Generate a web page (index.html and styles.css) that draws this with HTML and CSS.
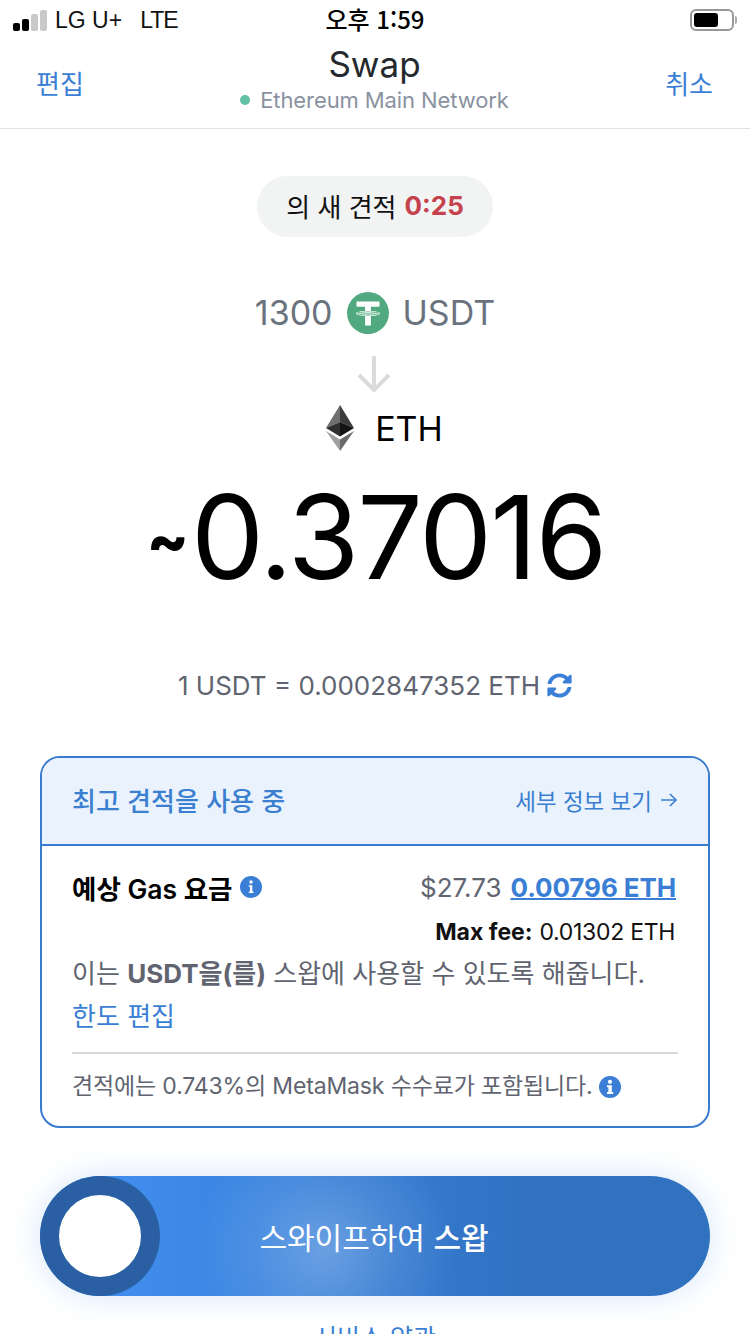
FILE: index.html
```html
<!DOCTYPE html>
<html lang="ko">
<head>
  <meta charset="UTF-8" />
  <meta name="viewport" content="width=device-width, initial-scale=1.0" />
  <title>Swap</title>
  <link rel="stylesheet" href="styles.css">
</head>
<body>
  <!-- status bar -->
  <div class="status-bar">
    <div class="status-left">
      <div class="signal">
        <span class="bar on b1"></span><span class="bar on b2"></span><span class="bar b3"></span><span class="bar b4"></span>
      </div>
      <span class="carrier">LG U+</span>
      <span class="carrier lte">LTE</span>
    </div>
    <div class="status-time">오후 1:59</div>
    <div class="status-right">
      <div class="battery"><div class="battery-fill"></div></div>
      <div class="battery-cap"></div>
    </div>
  </div>

  <!-- nav header -->
  <div class="nav">
    <a class="nav-link">편집</a>
    <div class="nav-title">
      <div class="nav-swap">Swap</div>
      <div class="nav-network"><span class="network-dot"></span>Ethereum Main Network</div>
    </div>
    <a class="nav-link">취소</a>
  </div>

  <div class="content">
    <div class="quote-pill"><span>의 새 견적</span><b class="timer">0:25</b></div>

    <div class="token-row source">
      <span class="token-text">1300</span>
      <svg class="token-icon" viewBox="0 0 42 42">
        <circle cx="21" cy="21" r="21" fill="#50a97f"/>
        <path d="M9.500 9.500h23v5.200h-8.600v4.200c5.200.3 9.200 1.300 9.200 2.500s-4 2.200-9.200 2.500v9.600h-5.800v-9.600c-5.200-.3-9.200-1.300-9.200-2.500s4-2.200 9.200-2.500v-4.200H9.500z" fill="#fff"/>
        <ellipse cx="21" cy="21.500" rx="11" ry="1.900" fill="#50a97f"/>
        <ellipse cx="21" cy="21.300" rx="9.800" ry="1.300" fill="#fff"/>
        <path d="M11.500 20.500c3 1 16 1 19 0" fill="none" stroke="#50a97f" stroke-width=".8"/>
      </svg>
      <span class="token-text">USDT</span>
    </div>

    <svg class="down-arrow" viewBox="0 0 34 38">
      <path d="M17 1v34M2 20l15 15 15-15" fill="none" stroke="#dadbdd" stroke-width="4"/>
    </svg>

    <div class="token-row dest">
      <svg class="eth-icon" viewBox="0 0 30 46">
        <path d="M15 0L1 23l14-6z" fill="#6f6f6f"/>
        <path d="M15 0l14 23-14-6z" fill="#3c3c3c"/>
        <path d="M15 17L1 23l14 8.500z" fill="#2f2f2f"/>
        <path d="M15 17l14 6-14 8.500z" fill="#141414"/>
        <path d="M1 26l14 20V34.500z" fill="#a0a0a0"/>
        <path d="M29 26L15 46V34.500z" fill="#6a6a6a"/>
      </svg>
      <span>ETH</span>
    </div>

    <div class="amount"><span class="tilde">~</span>0.37016</div>

    <div class="rate">
      <span>1 USDT = 0.0002847352 ETH</span>
      <svg class="refresh" viewBox="0 0 512 512">
        <path fill="#3a7fd8" d="M370.700 133.300C339.500 104 298.900 88 255.800 88c-77.500.1-144.300 53.200-162.800 126.900-1.300 5.400-6.100 9.200-11.700 9.200H24.100c-7.500 0-13.200-6.800-11.800-14.200C33.900 94.900 134.800 8 256 8c66.400 0 126.800 26.100 171.300 68.700L463 41c15.100-15.100 41-4.400 41 17V192c0 13.300-10.700 24-24 24H345.900c-21.400 0-32.100-25.900-17-41zM32 296h134.100c21.400 0 32.100 25.900 17 41l-41.800 41.800c31.300 29.300 71.800 45.300 114.900 45.200 77.400-.1 144.300-53.100 162.800-126.800 1.300-5.400 6.100-9.200 11.700-9.200h57.300c7.500 0 13.200 6.800 11.800 14.200C478.100 417.100 377.200 504 256 504c-66.400 0-126.800-26.100-171.300-68.700L49 471c-15.100 15.100-41 4.400-41-17V320c0-13.300 10.700-24 24-24z"/>
      </svg>
    </div>

    <div class="card">
      <div class="card-head">
        <span class="card-title">최고 견적을 사용 중</span>
        <span class="card-details">세부 정보 보기
          <svg class="details-arrow" viewBox="0 0 18 16"><path d="M1 8h15M10 2l6 6-6 6" fill="none" stroke="#3a7fd0" stroke-width="1.600"/></svg>
        </span>
      </div>
      <div class="card-body">
        <div class="gas-row">
          <div class="gas-label">예상 Gas 요금
            <svg class="info" viewBox="0 0 22 22">
              <circle cx="11" cy="11" r="11" fill="#3a7fd5"/>
              <circle cx="11" cy="6" r="1.700" fill="#fff"/>
              <path d="M8.800 9.300h3.500v6.300h1.200v1.500H8.800v-1.500H10v-4.800H8.800z" fill="#fff"/>
            </svg>
          </div>
          <div class="gas-values"><span class="gas-usd">$27.73</span><a class="gas-eth">0.00796 ETH</a></div>
        </div>
        <div class="max-fee"><b>Max fee:</b> <span class="max-value">0.01302 ETH</span></div>
        <div class="allow-text">이는 <b>USDT을(를)</b> 스왑에 사용할 수 있도록 해줍니다.</div>
        <a class="edit-limit">한도 편집</a>
        <div class="fee-note">견적에는 0.743%의 MetaMask 수수료가 포함됩니다.
          <svg class="info" viewBox="0 0 22 22">
            <circle cx="11" cy="11" r="11" fill="#3a7fd5"/>
            <circle cx="11" cy="5.800" r="2.100" fill="#fff"/>
            <path d="M8 9.200h4.800v6.700h1.400v2H8v-2h1.400v-4.700H8z" fill="#fff"/>
          </svg>
        </div>
      </div>
    </div>

    <div class="swipe">
      <div class="swipe-thumb"><div class="swipe-knob"></div></div>
      <div class="swipe-label">스와이프하여 <b class="swipe-strong">스왑</b></div>
    </div>

    <a class="terms">서비스 약관</a>
  </div>
</body>
</html>
```

FILE: styles.css
```css
* {
  box-sizing: border-box;
}

html, body {
  margin: 0;
  padding: 0;
  height: 1334px;
  overflow: hidden;
}

body {
  width: 750px;
  background: #fff;
  color: #000;
  font-family: Inter, "Noto Sans CJK KR", sans-serif;
}

b {
  font-weight: 700;
}

/* status bar */
.status-bar {
  height: 40px;
  padding: 0 13px;
  display: grid;
  grid-template-columns: 1fr auto 1fr;
  align-items: center;
}

.status-left {
  display: flex;
  align-items: center;
  gap: 18px;
  font-family: "Liberation Sans", "Noto Sans CJK KR", sans-serif;
  font-size: 23px;
  color: #111;
}

.lte {
  letter-spacing: -1px;
}

.signal {
  display: flex;
  align-items: flex-end;
  gap: 2px;
  height: 21px;
  margin-right: -10px;
}

.bar {
  width: 7px;
  border-radius: 2px;
  background: #c9c9c9;
}

.bar.on {
  background: #000;
}

.b1 { height: 8px; }
.b2 { height: 12px; }
.b3 { height: 17px; }
.b4 { height: 21px; }

.status-time {
  font-family: "Noto Sans CJK KR", sans-serif;
  font-size: 24px;
  line-height: 38px;
  font-weight: 500;
  padding-bottom: 2px;
}

.status-right {
  display: flex;
  justify-content: flex-end;
  align-items: center;
}

.battery {
  width: 44px;
  height: 22px;
  border: 2px solid #999;
  border-radius: 6px;
  padding: 2px;
}

.battery-fill {
  width: 24px;
  height: 100%;
  background: #000;
  border-radius: 3px;
}

.battery-cap {
  width: 2px;
  height: 8px;
  margin-left: 1px;
  background: #aaa;
  border-radius: 0 2px 2px 0;
}

/* nav header */
.nav {
  height: 89px;
  padding: 0 37px 0 36px;
  display: flex;
  justify-content: space-between;
  align-items: center;
  border-bottom: 1px solid #dfe0e2;
}

.nav-link {
  font-family: "Noto Sans CJK KR", sans-serif;
  font-size: 26px;
  color: #3a7fd5;
  margin-top: -4px;
}

.nav-title {
  display: flex;
  flex-direction: column;
  align-items: center;
  margin-top: -12px;
}

.nav-swap {
  font-size: 35px;
  line-height: 44px;
  color: #24292e;
}

.nav-network {
  display: flex;
  align-items: center;
  font-size: 22px;
  letter-spacing: -.1px;
  line-height: 28px;
  color: #8a92a0;
}

.network-dot {
  width: 10px;
  height: 10px;
  margin-right: 10px;
  border-radius: 50%;
  background: #62c1a2;
}

/* quote area */
.content {
  display: flex;
  flex-direction: column;
  align-items: center;
}

.quote-pill {
  margin-top: 47px;
  width: 236px;
  height: 61px;
  padding-bottom: 3px;
  display: flex;
  align-items: center;
  justify-content: center;
  gap: 8px;
  border-radius: 31px;
  background: #f2f4f4;
  font-size: 26px;
  color: #111;
}

.timer {
  color: #c5414c;
}

.token-row {
  display: flex;
  align-items: center;
  font-size: 34px;
}

.token-row.source {
  margin-top: 54px;
  gap: 14px;
  height: 44px;
  color: #6a737d;
}

.token-text {
  padding-bottom: 2px;
}

.token-icon {
  width: 42px;
  height: 42px;
}

.down-arrow {
  width: 34px;
  height: 38px;
  margin-top: 20px;
  margin-right: 2px;
}

.token-row.dest {
  margin-top: 12px;
  margin-left: 18px;
  gap: 20px;
  height: 46px;
  color: #000;
}

.eth-icon {
  width: 30px;
  height: 46px;
}

.amount {
  margin-top: 21px;
  margin-left: 2px;
  height: 130px;
  display: flex;
  align-items: center;
  font-size: 116px;
  letter-spacing: -2px;
  line-height: 130px;
  color: #000;
}

.tilde {
  margin-top: 6px;
  margin-right: 2px;
  font-size: 62px;
  font-weight: 800;
  letter-spacing: 0;
}

.rate {
  margin-top: 65px;
  height: 36px;
  display: flex;
  align-items: center;
  gap: 7px;
  font-size: 26px;
  color: #5f6470;
}

.refresh {
  width: 25px;
  height: 25px;
}

/* info card */
.card {
  margin-top: 53px;
  width: 670px;
  height: 372px;
  border: 2px solid #3a7bd0;
  border-radius: 20px;
  overflow: hidden;
}

.card-head {
  height: 88px;
  padding: 0 30px 4px;
  display: flex;
  justify-content: space-between;
  align-items: center;
  background: #eaf3fd;
  border-bottom: 2px solid #3a7bd0;
  color: #3a7fd0;
}

.card-title {
  font-family: "Noto Sans CJK KR", sans-serif;
  font-size: 26px;
  font-weight: 500;
}

.card-details {
  display: flex;
  align-items: center;
  gap: 8px;
  margin-top: 2px;
  font-family: "Noto Sans CJK KR", sans-serif;
  font-size: 22.500px;
}

.details-arrow {
  width: 18px;
  height: 16px;
}

.card-body {
  padding: 21px 30px 0;
}

.gas-row {
  height: 40px;
  display: flex;
  justify-content: space-between;
  align-items: center;
  padding-right: 2px;
}

.gas-label {
  display: flex;
  align-items: center;
  gap: 7px;
  font-size: 26.500px;
  font-weight: 600;
  color: #000;
}

.info {
  width: 22px;
  height: 22px;
  flex: none;
}

.gas-values {
  display: flex;
  gap: 9px;
  align-items: center;
  font-size: 26px;
}

.gas-usd {
  color: #5f6470;
}

.gas-eth {
  color: #3a7fd5;
  font-weight: 700;
  letter-spacing: -.1px;
  text-decoration: underline;
  text-decoration-thickness: 2px;
}

.max-fee {
  margin-top: 7px;
  height: 36px;
  padding-right: 3px;
  display: flex;
  justify-content: flex-end;
  align-items: center;
  gap: 7px;
  font-size: 23px;
  color: #111;
}

.max-value {
  letter-spacing: -.3px;
}

.allow-text {
  margin-top: 2px;
  font-size: 26px;
  line-height: 44px;
  color: #5f6470;
}

.edit-limit {
  display: block;
  font-size: 26px;
  line-height: 42px;
  color: #3a7fd5;
}

.fee-note {
  margin-top: 14px;
  padding-top: 16px;
  border-top: 2px solid #d6d9dc;
  display: flex;
  align-items: center;
  gap: 6px;
  font-size: 23px;
  letter-spacing: -.15px;
  line-height: 33px;
  color: #5f6470;
}

/* swipe button */
.swipe {
  position: relative;
  margin-top: 48px;
  width: 670px;
  height: 120px;
  flex: none;
  display: flex;
  align-items: center;
  justify-content: center;
  border-radius: 60px;
  background:
    radial-gradient(circle 130px at 285px 74px, rgba(255,255,255,.25), rgba(255,255,255,.09) 55%, rgba(255,255,255,0)),
    linear-gradient(90deg, #3f8cec 15%, #3071c0 75%);
  box-shadow: 0 0 30px rgba(60,140,235,.22);
  color: #fff;
  font-size: 30px;
}

.swipe-thumb {
  position: absolute;
  left: 0;
  top: 0;
  width: 120px;
  height: 120px;
  display: flex;
  align-items: center;
  justify-content: center;
  border-radius: 50%;
  background: #2a5fa3;
}

.swipe-knob {
  width: 82px;
  height: 82px;
  border-radius: 50%;
  background: #fff;
}

.swipe-label {
  margin-right: 2px;
}

.swipe-strong {
  font-weight: 500;
}

.terms {
  margin-top: 22px;
  font-size: 25px;
  color: #3a7fd5;
}
```
